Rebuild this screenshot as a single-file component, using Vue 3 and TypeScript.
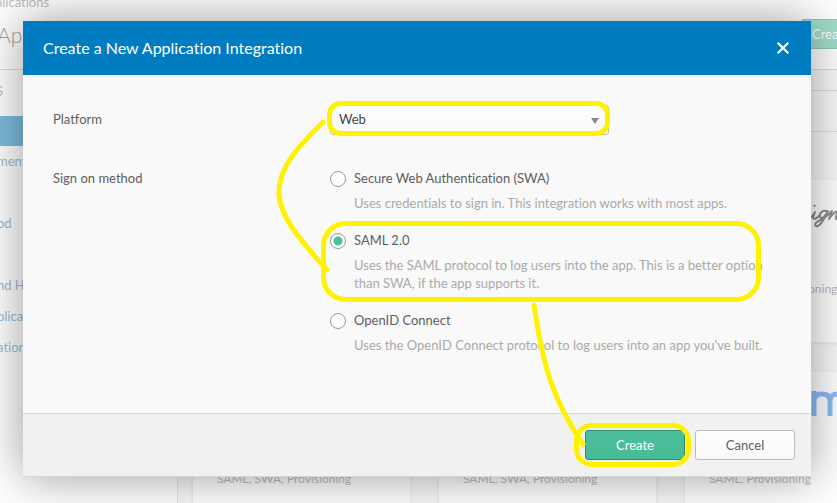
<script setup lang="ts">
import { ref } from 'vue'

interface SignOnMethod {
  id: string
  name: string
  hint: string
}

const platform = ref('web')
const method = ref('saml')

const methods: SignOnMethod[] = [
  { id: 'swa', name: 'Secure Web Authentication (SWA)', hint: 'Uses credentials to sign in. This integration works with most apps.' },
  { id: 'saml', name: 'SAML 2.0', hint: 'Uses the SAML protocol to log users into the app. This is a better option than SWA, if the app supports it.' },
  { id: 'oidc', name: 'OpenID Connect', hint: "Uses the OpenID Connect protocol to log users into an app you've built." },
]

const links = ['ment', '', 'od', '', 'nd H', 'plicat', 'ation']
</script>

<template>
  <div class="stage">
    <div class="page">
      <div class="crumb">plications</div>
      <header class="page-head">
        <h2>Ap</h2>
        <button type="button" class="page-create">Create</button>
      </header>
      <div class="columns">
        <nav class="side">
          <p class="side-title">S</p>
          <div class="side-active"></div>
          <ul>
            <li v-for="(l, i) in links" :key="i"><a v-if="l" href="#">{{ l }}</a></li>
          </ul>
        </nav>
        <main class="main">
          <div class="toolbar"></div>
          <div class="cards">
            <section class="card"></section>
            <section class="card"></section>
            <section class="card">
              <svg class="sign" width="40" height="32" viewBox="0 0 40 32" fill="none" stroke="#222" stroke-width="2" stroke-linecap="round" stroke-linejoin="round" aria-hidden="true">
                <path d="M5.500 5.500v.5M0 19c3-1 4-4 6-7-1 3-3 6-1 7 2 0 4-2 6-4M17 11c-4-1-7 3-6 6 2 3 6-2 8-6-3 6-6 13-10 15-3 1-4-2-1-4 4-3 9-4 13-9l2-2-3 8c3-4 6-8 8-7 1 1-2 5-1 7 2 0 5-3 7-6" />
              </svg>
              <p class="card-note">Provisioning</p>
            </section>
            <section class="card low"><p>SAML, SWA, Provisioning</p></section>
            <section class="card low"><p>SAML, SWA, Provisioning</p></section>
            <section class="card low">
              <svg class="brand" width="50" height="30" viewBox="0 0 50 30" fill="none" stroke="#1d7bf0" stroke-width="5" aria-hidden="true">
                <path d="M10 27V2M10 12q0-7 8-7t8 7v15M26 12q0-7 8-7t8 7v15" />
              </svg>
              <p>SAML, Provisioning</p>
            </section>
          </div>
        </main>
      </div>
    </div>

    <form class="dialog" role="dialog" aria-labelledby="dialog-title" @submit.prevent>
      <header class="dialog-head">
        <h1 id="dialog-title">Create a New Application Integration</h1>
        <button type="button" class="close" aria-label="Close">
          <svg width="12" height="12" viewBox="0 0 12 12" fill="none" stroke="#fff" stroke-width="2" aria-hidden="true">
            <path d="M.7.7l10.6 10.6M11.3.7L.7 11.3" />
          </svg>
        </button>
      </header>
      <div class="dialog-body">
        <div class="row">
          <label class="row-label" for="platform">Platform</label>
          <div class="select">
            <select id="platform" v-model="platform">
              <option value="web">Web</option>
            </select>
            <svg width="8" height="6" viewBox="0 0 8 6" fill="#888" aria-hidden="true"><path d="M0 0h8L4 6z" /></svg>
          </div>
        </div>
        <div class="row" role="radiogroup" aria-labelledby="method-label">
          <span id="method-label" class="row-label">Sign on method</span>
          <div class="options">
            <div v-for="m in methods" :key="m.id" class="option">
              <input :id="m.id" v-model="method" type="radio" name="method" :value="m.id" />
              <div>
                <label :for="m.id">{{ m.name }}</label>
                <p>{{ m.hint }}</p>
              </div>
            </div>
          </div>
        </div>
      </div>
      <footer class="dialog-foot">
        <button type="submit" class="btn primary">Create</button>
        <button type="button" class="btn">Cancel</button>
      </footer>
    </form>

    <svg class="marks" width="837" height="503" viewBox="0 0 837 503" fill="none" stroke="#fff200" stroke-width="5" stroke-linecap="round" aria-hidden="true">
      <rect x="329.500" y="103.500" width="278" height="30" rx="11" />
      <path d="M323 122C302 143 279 165 279 192C279 217 302 242 327 270" />
      <rect x="323.500" y="223.500" width="435" height="76" rx="22" />
      <path d="M534 305C543 365 552 399 583 444" />
      <rect x="576.500" y="425.500" width="112" height="39" rx="15" />
    </svg>
  </div>
</template>

<style>
body {
  background: #fff;
  overflow: hidden;
}
</style>

<style scoped>
* {
  box-sizing: border-box;
}
.stage {
  position: relative;
  height: 100vh;
  overflow: hidden;
  font: 13px/18px "Lato", "Liberation Sans", sans-serif;
  font-variant-ligatures: none;
}
h1, h2, p, ul {
  margin: 0;
  padding: 0;
  font-weight: 400;
}
button, select, input {
  font: inherit;
  margin: 0;
}
.page {
  min-height: 100vh;
  opacity: 0.5;
  color: #777;
}
.crumb {
  height: 12px;
  margin-left: -5px;
  line-height: 4px;
}
.page-head {
  height: 58px;
  display: flex;
  justify-content: space-between;
  border-bottom: 1px solid #bbb;
}
.page-head h2 {
  margin-left: -3px;
  font-size: 21px;
  font-weight: 300;
  line-height: 46px;
  color: #444;
}
.page-create {
  width: 100px;
  height: 30px;
  margin: 7px -64px 0 0;
  padding: 0 0 0 10px;
  text-align: left;
  color: #fff;
  background: #46bc96;
  border: 1px solid #2c8c6e;
  border-radius: 3px;
}
.columns {
  display: flex;
}
.side {
  flex: 0 0 178px;
  height: 433px;
  border-right: 1px solid #ccc;
}
.side-title {
  height: 46px;
  margin-left: -4px;
  padding-top: 12px;
}
.side-active {
  height: 30px;
  background: #007dc1;
}
.side ul {
  margin-left: -3px;
}
.side li {
  height: 31px;
  line-height: 31px;
  list-style: none;
}
.side a {
  color: #2b7fb8;
  text-decoration: none;
}
.main {
  flex: 1;
  min-width: 0;
  background: #f4f4f4;
}
.toolbar {
  height: 62px;
  padding-top: 20px;
  border-bottom: 1px solid #bbb;
}
.toolbar::before {
  content: "";
  display: block;
  border-top: 1px solid #bbb;
}
.cards {
  display: grid;
  grid-template-columns: repeat(3, 217px);
  gap: 30px 29px;
  padding: 48px 0 0 15px;
}
.card {
  height: 162px;
  background: #fff;
  box-shadow: 0 1px 4px #ccc;
  padding: 0 24px;
  font-size: 12px;
}
.card-note {
  padding: 48px 0 0 64px;
}
.sign {
  display: block;
  margin: 20px 0 0 100px;
}
.low {
  padding-top: 98px;
}
.brand {
  display: block;
  margin: -81px 0 51px 95px;
}
.dialog {
  position: absolute;
  inset: 21px 26px auto 23px;
  background: #f9f9f9;
  color: #5e5e5e;
  border-bottom: 1px solid #d5d5d5;
  box-shadow: 0 0 45px rgba(0, 0, 0, 0.4);
}
.dialog-head {
  height: 54px;
  padding: 0 22px 0 20px;
  display: flex;
  align-items: center;
  justify-content: space-between;
  background: #007dc1;
  color: #fff;
}
.dialog-head h1 {
  font-size: 16px;
  line-height: 24px;
}
.close {
  display: flex;
  padding: 0;
  border: 0;
  background: none;
}
.dialog-body {
  padding: 30px 20px 59px 30px;
}
.row {
  display: flex;
  align-items: flex-start;
}
.row + .row {
  margin-top: 34px;
}
.row-label {
  flex: 0 0 277px;
  padding-top: 5px;
}
.row + .row .row-label {
  padding-top: 0;
}
.select {
  position: relative;
  width: 279px;
}
.select select {
  display: block;
  width: 100%;
  height: 30px;
  padding: 0 8px 2px;
  appearance: none;
  color: #444;
  background: linear-gradient(#fff, #f9f9f9);
  border: 1px solid #bbb;
  border-radius: 3px;
}
.select svg {
  position: absolute;
  right: 10px;
  top: 13px;
}
.options {
  flex: 1;
  display: grid;
  gap: 19px;
}
.option {
  display: flex;
  gap: 8px;
}
.option input {
  flex: none;
  width: 16px;
  height: 16px;
  margin-top: 2px;
  appearance: none;
  border: 1px solid #999;
  border-radius: 50%;
  background: #fff;
}
.option input:checked {
  background: radial-gradient(circle, #4cbf9c 4px, #fff 5px);
}
.option label {
  display: block;
}
.option p {
  margin-top: 7px;
  color: #aaa;
}
.dialog-foot {
  height: 63px;
  padding: 0 16px;
  display: flex;
  align-items: center;
  justify-content: flex-end;
  gap: 10px;
  background: #f1f1f1;
  border-top: 1px solid #d8d8d8;
}
.btn {
  width: 100px;
  height: 30px;
  padding: 0;
  color: #5e5e5e;
  background: linear-gradient(#fff, #f9f9f9);
  border: 1px solid #bbb;
  border-radius: 3px;
}
.primary {
  color: #fff;
  background: linear-gradient(#4cbf9c, #46bc96);
  border-color: #2e8c70;
}
.marks {
  position: absolute;
  left: 0;
  top: 0;
  pointer-events: none;
}
</style>
